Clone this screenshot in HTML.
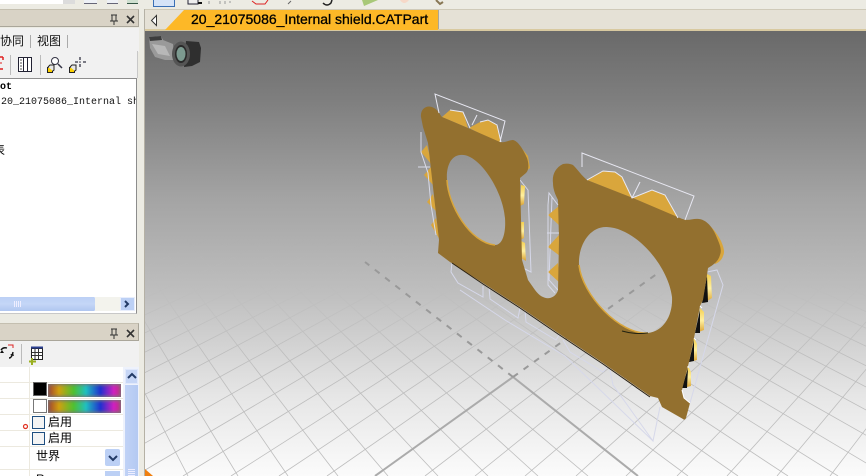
<!DOCTYPE html>
<html><head><meta charset="utf-8">
<style>
html,body{margin:0;padding:0;background:#e9e7e0;}
#r{position:relative;width:866px;height:476px;overflow:hidden;background:#ecebe3;font-family:"Liberation Sans","Noto Sans CJK SC",sans-serif;color:#000;}
.a{position:absolute;}
.t{position:absolute;white-space:nowrap;line-height:1;}
</style></head><body>
<div id="r">
<!-- top strip -->
<div class="a" style="left:0;top:0;width:63px;height:4px;background:#fff"></div>
<div class="a" style="left:63px;top:0;width:12px;height:4px;background:#dcdcdc"></div>
<div class="a" style="left:84px;top:0;width:13px;height:3px;background:#eef1f6;border-bottom:1px solid #667"></div>
<div class="a" style="left:107px;top:0;width:11px;height:3px;background:#eef1f6;border-bottom:1px solid #667"></div>
<div class="a" style="left:127px;top:0;width:11px;height:3px;background:#cfe0d0;border-bottom:1px solid #354"></div>
<div class="a" style="left:153px;top:0;width:20px;height:6px;background:#d5e3f7;border:1px solid #3a6fb5;border-top:0"></div>
<svg class="a" style="left:180px;top:0" width="290" height="9">
<path d="M8 0v4h10v-4" fill="#eee" stroke="#223"/><path d="M18 3h4" stroke="#111" stroke-width="2"/>
<path d="M29 1v3M40 1v3M45 1v3M50 1v2" stroke="#999"/>
<path d="M72 1l4 3h9l3-4" fill="none" stroke="#d22" stroke-width="1"/>
<path d="M108 4l3-3" stroke="#666"/>
<path d="M143 3q4 4 8 0l1-3" fill="none" stroke="#222" stroke-width="1.5"/>
<path d="M182 0l2 6 14-6z" fill="#a8c878"/>
<path d="M220 0q4 6 9 0" fill="#f6d8c8"/>
<path d="M256 0l4 4 3-2" fill="none" stroke="#875" stroke-width="2"/>
</svg>
<!-- left panel -->
<div class="a" style="left:0;top:9px;width:139px;height:18px;background:#d9d3c6;border-top:1px solid #c4bfb0;border-bottom:1px solid #aaa69a;border-right:1px solid #aaa69a;box-sizing:border-box"></div>
<svg class="a" style="left:108px;top:14px" width="30" height="12"><path d="M3 1h6M4 1v6h4V1M2 7h8M6 7v4" fill="none" stroke="#333"/><path d="M19 2l7 7M26 2l-7 7" stroke="#333" stroke-width="1.6"/></svg>
<div class="a" style="left:0;top:28px;width:139px;height:24px;background:#f1f1f1"></div>
<div class="t" style="left:0;top:35px;font-size:12px;color:#111">协同</div>
<div class="a" style="left:30px;top:35px;width:1px;height:13px;background:#aaa"></div>
<div class="t" style="left:37px;top:35px;font-size:12px;color:#111">视图</div>
<div class="a" style="left:67px;top:35px;width:1px;height:13px;background:#aaa"></div>
<div class="a" style="left:0;top:51px;width:137px;height:27px;background:#f1f1f1;border-right:1px solid #c8c8c8"></div>
<svg class="a" style="left:0;top:52px" width="100" height="26">
<path d="M0 5h3M3 5v3M0 17h3" stroke="#e02020" stroke-width="1.5" fill="none"/><path d="M0 11h2" stroke="#e02020"/>
<path d="M10.5 3v20M40.5 3v20" stroke="#bbb"/>
<rect x="18.500" y="5.500" width="13" height="14" fill="#fff" stroke="#223"/><path d="M18 5.500h14M23.500 6v13M27.500 6v13" stroke="#223"/><path d="M20 8h2M20 11h2M20 14h2M20 17h2" stroke="#555"/>
<circle cx="55" cy="9" r="3.500" fill="#fff" stroke="#334"/><path d="M58 12l4 4" stroke="#334" stroke-width="1.5"/>
<rect x="47.500" y="15.500" width="5" height="5" fill="#fcd000" stroke="#222"/><path d="M48 15l2-2h4v5l-1 1" fill="#e8e8e8" stroke="#222"/>
<rect x="69.500" y="15.500" width="5" height="5" fill="#fcd000" stroke="#222"/><path d="M70 15l2-2h4v5l-1 1" fill="#e8e8e8" stroke="#222"/>
<path d="M80 5v3M80 12v3M75 10h3M83 10h3" stroke="#334" stroke-width="1.3"/><circle cx="80" cy="10" r=".8" fill="#334"/>
</svg>
<!-- tree -->
<div class="a" style="left:0;top:78px;width:137px;height:236px;background:#fff;border-top:1px solid #8d8d8d;border-right:1px solid #8d8d8d;border-bottom:1px solid #c8c8c8;box-sizing:border-box;overflow:hidden">
<div class="t" style="left:-6px;top:3px;font:bold 10px 'Liberation Mono',monospace">oot</div>
<div class="t" style="left:1px;top:18px;font:10px 'Liberation Mono',monospace;color:#111">20_21075086_Internal sh</div>
<div class="t" style="left:-7px;top:65px;font-size:12px">表</div>
<div class="a" style="left:0;top:218px;width:95px;height:14px;background:linear-gradient(#bcd0f5,#c4d6f7 50%,#b0c6f0);border-right:1px solid #fff;border-radius:0 2px 2px 0"></div>
<div class="a" style="left:95px;top:218px;width:25px;height:14px;background:#f3f3ed"></div>
<div class="a" style="left:120px;top:218px;width:15px;height:14px;background:#bcd0f5;border:1px solid #e8eefc;box-sizing:border-box"></div>
<svg class="a" style="left:0;top:218px" width="136" height="14"><path d="M14.500 4v6M16.500 4v6M18.500 4v6M20.500 4v6" stroke="#eef"/><path d="M125 4l3 3-3 3" fill="none" stroke="#223a66" stroke-width="2"/></svg>
</div>
<!-- panel 2 -->
<div class="a" style="left:0;top:323px;width:139px;height:18px;background:#d9d3c6;border-top:1px solid #c4bfb0;border-bottom:1px solid #aaa69a;border-right:1px solid #aaa69a;box-sizing:border-box"></div>
<svg class="a" style="left:108px;top:328px" width="30" height="12"><path d="M3 1h6M4 1v6h4V1M2 7h8M6 7v4" fill="none" stroke="#333"/><path d="M19 2l7 7M26 2l-7 7" stroke="#333" stroke-width="1.6"/></svg>
<div class="a" style="left:0;top:341px;width:139px;height:26px;background:#f1f1f1"></div>
<svg class="a" style="left:0;top:341px" width="60" height="26">
<path d="M1 9q2-3 6-2M9 17q3 0 4-6" fill="none" stroke="#111" stroke-width="1.4"/><path d="M0 12l2-3 2 3M10 14l3-2 1 3" fill="#111"/>
<path d="M8 4h5v3" fill="none" stroke="#d22"/><path d="M21.500 3v20" stroke="#bbb"/>
<rect x="31.500" y="7.500" width="11" height="11" fill="#fff" stroke="#222"/><path d="M31 6.500h12" stroke="#2a3f90" stroke-width="2"/><path d="M35 8v10M38.500 8v10M32 11.500h10M32 14.500h10" stroke="#333"/>
<path d="M32 17v7M29 20.500h7" stroke="#9ab020" stroke-width="2"/>
</svg>
<div class="a" style="left:0;top:367px;width:123px;height:109px;background:#fff"></div>
<svg class="a" style="left:0;top:367px" width="123" height="109">
<path d="M0 15.500h123M0 31.500h123M0 47.500h123M0 63.500h123M0 79.500h123M0 102.500h123M29.500 0v109" stroke="#ece9df"/>
<rect x="33.500" y="15.500" width="13" height="13" fill="#000" stroke="#666"/>
<rect x="33.500" y="32.500" width="13" height="13" fill="#fff" stroke="#777"/>
<circle cx="25.500" cy="59.500" r="2" fill="#fff" stroke="#e03020" stroke-width="1.200"/>
<rect x="32.500" y="49.500" width="12" height="12" fill="#f4f4f4" stroke="#1f4f80"/>
<rect x="32.500" y="65.500" width="12" height="12" fill="#f4f4f4" stroke="#1f4f80"/>
</svg>
<div class="a" style="left:48px;top:384px;width:73px;height:13px;background:linear-gradient(90deg,#a04030,#d0a010 15%,#50c030 35%,#20c0c0 52%,#2030d0 72%,#d020c0 90%,#c03080);box-shadow:inset 0 0 3px 1px #777"></div>
<div class="a" style="left:48px;top:400px;width:73px;height:13px;background:linear-gradient(90deg,#a04030,#d0a010 15%,#50c030 35%,#20c0c0 52%,#2030d0 72%,#d020c0 90%,#c03080);box-shadow:inset 0 0 3px 1px #777"></div>
<div class="t" style="left:48px;top:416px;font-size:12px">启用</div>
<div class="t" style="left:48px;top:432px;font-size:12px">启用</div>
<div class="t" style="left:36px;top:450px;font-size:12px">世界</div>
<div class="a" style="left:105px;top:449px;width:15px;height:17px;background:#bcd0f5;border-radius:2px"></div>
<div class="a" style="left:105px;top:471px;width:15px;height:5px;background:#bcd0f5"></div>
<div class="t" style="left:36px;top:473px;font-size:12px">Ra</div>
<svg class="a" style="left:105px;top:449px" width="16" height="20"><path d="M4 7l4 4 4-4" fill="none" stroke="#223a66" stroke-width="2"/></svg>
<!-- scrollbar -->
<div class="a" style="left:123px;top:367px;width:16px;height:109px;background:#eef2fc"></div>
<div class="a" style="left:125px;top:369px;width:13px;height:15px;background:#c6d6f6;border:1px solid #e0e8fb;box-sizing:border-box"></div>
<svg class="a" style="left:125px;top:369px" width="14" height="15"><path d="M3 9l4-4 4 4" fill="none" stroke="#223a66" stroke-width="2"/></svg>
<div class="a" style="left:125px;top:385px;width:13px;height:91px;background:linear-gradient(90deg,#c0d2f6,#b4c9f2)"></div>
<svg class="a" style="left:125px;top:468px" width="14" height="8"><path d="M3 1.500h7M3 3.500h7M3 5.500h7M3 7.500h7" stroke="#eef"/></svg>
<div class="a" style="left:139px;top:9px;width:5px;height:467px;background:#ecebe3"></div>
<div class="a" style="left:144px;top:9px;width:1px;height:467px;background:#b5b1a5"></div>
<!-- tab bar -->
<div class="a" style="left:145px;top:9px;width:721px;height:21px;background:#e5e1d6;border-top:1px solid #cfcab9;box-sizing:border-box"></div>
<div class="a" style="left:145px;top:29px;width:721px;height:2px;background:#d8c9a0"></div>
<svg class="a" style="left:145px;top:9px" width="300" height="22">
<path d="M7.500 6.500v10l-5-5z" transform="translate(4 0)" fill="#fff" stroke="#333"/>
<path d="M20 21L39 1H293V21Z" fill="#fdb827"/>
<path d="M293.500 1v19" stroke="#aaa69a"/>
</svg>
<div class="t" style="left:191px;top:12px;font-size:14px;color:#000;-webkit-text-stroke:.3px #000">20_21075086_Internal shield.CATPart</div>
<!-- viewport -->
<div class="a" style="left:145px;top:31px;width:721px;height:445px;overflow:hidden">
<svg class="a" style="left:-145px;top:-31px" width="866" height="476" viewBox="0 0 866 476">
<defs>
<linearGradient id="bg" x1="0" y1="30" x2="0" y2="476" gradientUnits="userSpaceOnUse">
<stop offset="0" stop-color="#696969"/><stop offset=".16" stop-color="#7f7f7f"/><stop offset=".38" stop-color="#a4a4a4"/><stop offset=".6" stop-color="#c0c0c0"/><stop offset=".82" stop-color="#e6e6e6"/><stop offset="1" stop-color="#fbfbfb"/>
</linearGradient>
<linearGradient id="fd" x1="0" y1="240" x2="0" y2="350" gradientUnits="userSpaceOnUse"><stop offset="0" stop-color="#000"/><stop offset="1" stop-color="#fff"/></linearGradient>
<mask id="m" maskUnits="userSpaceOnUse" x="0" y="0" width="866" height="476"><rect width="866" height="476" fill="url(#fd)"/></mask>
<linearGradient id="tg" x1="0" y1="0" x2="0" y2="1"><stop offset="0" stop-color="#f4cf50"/><stop offset=".5" stop-color="#fff0a0"/><stop offset="1" stop-color="#d9a030"/></linearGradient>
</defs>
<rect x="0" y="0" width="866" height="476" fill="url(#bg)"/>
<g mask="url(#m)" stroke="#bdbdbd" fill="none" stroke-width=".8">
<path d="M-126 -127L138 476M-126 -127L188 476M-126 -127L238 476M-126 -127L288 476M-126 -127L338 476M-126 -127L388 476M-126 -127L438 476M-126 -127L488 476M-126 -127L538 476M-126 -127L588 476M-126 -127L688 476M-126 -127L738 476M-126 -127L788 476M-126 -127L838 476M-126 -127L888 476M-126 -127L938 476M-126 -127L988 476M-126 -127L1038 476M-126 -127L1088 476M-126 -127L1138 476M-126 -127L1188 476M-126 -127L1238 476M-126 -127L1288 476M-126 -127L1338 476M-126 -127L1388 476M-126 -127L1438 476M-126 -127L1488 476M-126 -127L1538 476"/>
<path d="M1400 -270L327 476M1400 -270L279 476M1400 -270L231 476M1400 -270L183 476M1400 -270L135 476M1400 -270L87 476M1400 -270L39 476M1400 -270L-9 476M1400 -270L-57 476M1400 -270L-105 476M1400 -270L-153 476M1400 -270L-201 476M1400 -270L-249 476M1400 -270L-297 476M1400 -270L-345 476M1400 -270L425 476M1400 -270L475 476M1400 -270L525 476M1400 -270L576 476M1400 -270L626 476M1400 -270L677 476M1400 -270L727 476M1400 -270L777 476M1400 -270L830 476M1400 -270L885 476"/>
</g>
<path d="M375 476L513 377L638 476" fill="none" stroke="#ababab" stroke-width="2"/>
<path d="M513 377L365 262M513 377L658 273" fill="none" stroke="#999" stroke-width="2" stroke-dasharray="6 7"/>
<!-- wires bottom -->
<g fill="none" stroke="#d6d8ea" stroke-width="1">
<path d="M452 262L451 272L458 283L483 297L483 286M489 287L490 299L518 318L520 308M525 310L526 322L556 340L559 335M563 340L570 352L603 372L608 366M610 370L613 385L653 441L660 407"/>
<path d="M460 290L505 320L565 356L653 441"/>
<path d="M707 272L717 270L723 285L690 403"/>
<path d="M520 180L528 190L531 272L523 268" />
<path d="M552 197L549 280L558 290"/>
</g>
<!-- back flanges -->
<g fill="#d9a63c">
<path d="M442 117L450 110L463 112L468 128Z"/>
<path d="M469 128L480 122L488 120L497 125L501 144Z"/>
<path d="M587 180L603 171L615 172L622 177L632 198Z"/>
<path d="M633 198L652 190L665 195L678 218Z"/>
<path d="M421 152L427 145L432 165Z"/><path d="M424 175L431 167L434 186Z"/><path d="M427 202L433 194L437 212Z"/><path d="M431 225L436 218L440 240Z"/>
<path d="M548 215L559 206L560 226Z"/><path d="M548 247L559 235L560 256Z"/><path d="M548 272L558 263L560 283Z"/>
<path d="M707 223C713 228 718 235 721 241C724 248 725 252 723 256C722 260 718 263 715 264L710 240Z"/>
<path d="M520 146L528 156L530 168L525 172Z"/>
</g>
<g>
<path d="M521 185L525 186L524 204L520 206Z" fill="url(#tg)"/><path d="M521 222L524 222L524 238L520 240Z" fill="url(#tg)"/><path d="M521 241L525 243L526 261L521 258Z" fill="url(#tg)"/>
<path d="M707 274L711 276L712 298L704 303Z" fill="url(#tg)"/><path d="M700 308L704 312L704 330L696 333Z" fill="url(#tg)"/><path d="M694 338L697 344L697 360L689 362Z" fill="url(#tg)"/><path d="M688 366L691 372L691 386L683 388Z" fill="url(#tg)"/>
<path d="M707 276L708 302L702 303Z" fill="#111"/><path d="M700 310L700 333L695 333Z" fill="#111"/><path d="M694 340L694 361L689 362Z" fill="#111"/><path d="M688 368L687 388L682 388Z" fill="#111"/>
</g>
<!-- main body -->
<path fill="#93702f" fill-rule="evenodd" d="M421 117C420 108 428 104 434 108C438 110 440 115 442 117L468 128L500 142C505 143 509 140 513 140C518 141 523 149 527 158C529 164 529 170 526 173L520 178L522 260L528 280L535 290C540 297 546 299 550 298C554 297 557 294 558 290L559 240L558 200C555 194 553 189 553 183C552 175 555 168 563 164C568 163 571 164 573 165C578 170 582 176 587 180L633 198L680 218C688 222 692 218 699 219C708 220 714 230 717 238C720 245 722 250 720 255C718 262 713 265 708 268L707 275L703 300L700 306L695 333L694 338L689 362L688 366L682 390L684 398L690 403L686 418C685 420 684 420 683 419L662 407L658 398L650 396L603 363L558 333L520 307L483 283L450 262L438 253L439 240L428 143L423 127Z
M460 155C450 156 446 168 447 180C448 205 470 243 495 245C503 245 506 232 505 218C503 190 478 152 460 155Z
M607 227C590 226 578 245 579 265C582 295 620 335 648 333C664 331 673 315 672 297C668 265 635 228 607 227Z"/>
<!-- edges -->
<path d="M452 263L483 284L520 308L558 334L603 364L650 397" fill="none" stroke="#2a2010" stroke-width="1"/>
<path d="M447 180C448 205 470 243 495 245" fill="none" stroke="#d9a63c" stroke-width="1.500"/>
<path d="M579 265C582 295 620 335 648 333" fill="none" stroke="#d9a63c" stroke-width="1.500"/>
<path d="M622 331C632 334 640 334 648 333" fill="none" stroke="#221" stroke-width="1"/>
<!-- wires top -->
<g fill="none" stroke="#e8e8f2" stroke-width="1">
<path d="M439 113L435 94L505 121L500 142"/>
<path d="M582 167L582 153L694 196L685 220"/>
<path d="M450 110L463 112L470 128M480 122L488 120L497 125L501 142M472 125L477 115"/>
<path d="M587 180L603 171L615 172L622 177L632 198L652 190L665 195L678 218M632 198L640 182"/>
<path d="M421 132L421 152L428 173L431 205L436 235M418 167H430" stroke="#d8dae8"/>
<path d="M558 205L549 193L548 205L548 285L555 293M547 233H559" stroke="#d8dae8"/>
<path d="M682 390L684 398L690 403M688 366L688 368M694 338L696 340M700 306L702 308" stroke="#fff"/>
</g>
<!-- camera -->
<g>
<path d="M149 37L161 36L163 40L173 44L174 60L165 60L155 57L150 48Z" fill="#9a9a9a"/>
<path d="M152 44L165 46L170 56L158 54Z" fill="#b8b8b8"/>
<path d="M149 37L161 36L162 40L150 41Z" fill="#3c3c3c"/>
<path d="M186 41L199 42L201 48L200 62L192 66L184 67Z" fill="#2f2f2f"/>
<ellipse cx="181" cy="54" rx="9" ry="12.500" fill="#555"/>
<ellipse cx="181" cy="54" rx="6" ry="9" fill="#2a2a2a"/>
<ellipse cx="181" cy="54" rx="4.500" ry="7" fill="#7c9a90"/>
</g>
<path d="M145 476V469L153 476Z" fill="#f08010"/>
</svg>
</div>
</div>
</body></html>
